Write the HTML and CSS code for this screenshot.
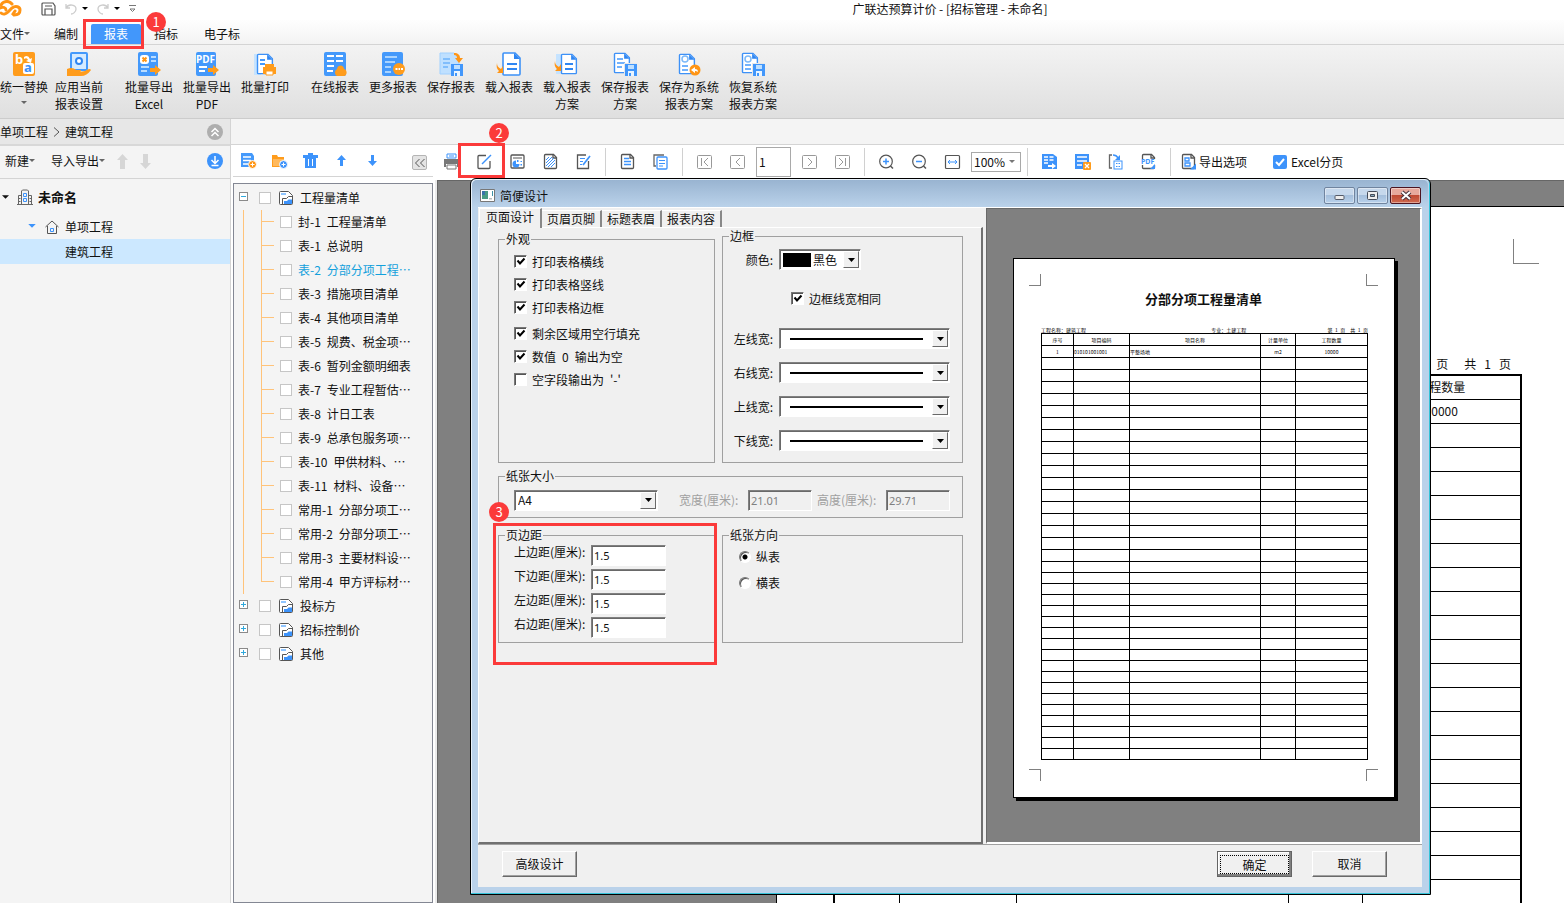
FILE: index.html
```html
<!DOCTYPE html>
<html lang="zh-CN">
<head>
  <meta charset="UTF-8" />
  <meta name="viewport" content="width=device-width, initial-scale=1.0"/>
  <title>广联达预算计价 - [招标管理 - 未命名]</title>
  <link rel="stylesheet" href="styles.css">
</head>
<body>

  <!-- shared icons -->
  <svg class="sprite" aria-hidden="true">
    <symbol id="i-page" viewBox="0 0 24 24">
      <path d="M5 1h11l5 5v16a1 1 0 0 1-1 1H5a1 1 0 0 1-1-1V2a1 1 0 0 1 1-1z" fill="#fff" stroke="#3d91f7" stroke-width="1.6"/>
      <path d="M15 1l6 6h-6z" fill="#2f86f2"/>
    </symbol>
    <symbol id="i-floppy" viewBox="0 0 12 12">
      <path d="M0 0h12v12H0z" fill="#4297fb"/>
      <path d="M3 1h6v4H3z" fill="#bfe0ff"/>
      <path d="M3 7h6v5H3z" fill="#eaf5ff"/>
      <path d="M4 9h2v3H4z" fill="#4297fb"/>
    </symbol>
    <symbol id="i-caret" viewBox="0 0 6 4"><path d="M0 0h6L3 3z" fill="currentColor"/></symbol>
    <symbol id="i-report" viewBox="0 0 16 16">
      <path d="M1.500 2.500a1 1 0 0 1 1-1h8l4 4v8a1 1 0 0 1-1 1h-11a1 1 0 0 1-1-1z" fill="#fff" stroke="#555"/>
      <path d="M3 3h5v2H3z" fill="#8fc5ff"/>
      <path d="M4.500 14V8.500h4l2-2h4" fill="none" stroke="#555"/>
      <path d="M6 11h3l1.500-1.500H14V14H6z" fill="#3d93fb"/>
    </symbol>
    <symbol id="i-sheet" viewBox="0 0 17 17">
      <path d="M3.500 1.500h8l3 3v10a1 1 0 0 1-1 1h-10a1 1 0 0 1-1-1v-12a1 1 0 0 1 1-1z" fill="#fff" stroke="#555" stroke-width="1.300"/>
      <path d="M11 1.500v3.500h3.500" fill="none" stroke="#555" stroke-width="1.300"/>
    </symbol>
  </svg>

  <header class="titlebar">
    <div class="quick">
      <svg class="logo" width="22" height="17" viewBox="0 0 22 17" fill="none" stroke="#ff9515" stroke-width="3" stroke-linecap="round"><path d="M1 5C3 1 9 0 12 4"/><path d="M0 8c3-2 6 0 6 2"/><path d="M1 13c2 2 5 1 7-1l4-4c4-3 8-1 8 2 0 4-3 5-6 5l-1-1 2-3"/></svg>
      <button class="q-save" aria-label="保存"><svg width="15" height="14" viewBox="0 0 15 14" fill="none" stroke="#555" stroke-width="1.2"><path d="M2 1h10l2 3v8a1 1 0 0 1-1 1H2a1 1 0 0 1-1-1V2a1 1 0 0 1 1-1zM4 4h7M4 13V7h7v6"/></svg></button>
      <button aria-label="撤销"><svg width="12" height="13" viewBox="0 0 12 13" fill="none" stroke="#ccc" stroke-width="1.300"><path d="M1 2v4h4M1 6c3-5 10-3 10 1 0 3-3 5-5 5"/></svg></button>
      <button class="dark" aria-label="撤销列表"><svg width="6" height="4"><use href="#i-caret"/></svg></button>
      <button aria-label="恢复"><svg width="12" height="13" viewBox="0 0 12 13" fill="none" stroke="#ccc" stroke-width="1.300"><path d="M11 2v4H7M11 6C8 1 1 3 1 7c0 3 3 5 5 5"/></svg></button>
      <button class="dark" aria-label="恢复列表"><svg width="6" height="4"><use href="#i-caret"/></svg></button>
      <button aria-label="自定义"><svg width="7" height="8" viewBox="0 0 7 8" fill="none" stroke="#777"><path d="M0 .5h7M1 4h5L3.500 6.500z"/></svg></button>
    </div>
    <h1>广联达预算计价 - [招标管理 - 未命名]</h1>
  </header>

  <nav class="menu">
    <button class="file">文件<svg width="6" height="4"><use href="#i-caret"/></svg></button>
    <button>编制</button>
    <button class="active">报表<span class="mark mark-tab"></span></button>
    <button>指标<span class="badge badge-tab">1</span></button>
    <button>电子标</button>
  </nav>

  <section class="ribbon">
    <button class="first">
      <svg viewBox="0 0 24 24"><rect x="1" width="22" height="24" rx="2" fill="#ff9c1c"/><text x="3" y="12" class="ic-b" fill="#fff">b</text><path d="M12 5q4-3 6 2l2-1-1 5-5-2 2-1q-1-3-4-1z" fill="#fff"/><rect x="11" y="11" width="11" height="11" rx="2" fill="#fff"/><text x="12" y="20" class="ic-b" fill="#3d91f7">a</text></svg>
      <span>统一替换</span>
      <svg class="drop"><use href="#i-caret"/></svg>
    </button>
    <button>
      <svg viewBox="0 0 24 24"><rect x="4" y="1" width="16" height="17" rx="1" fill="#d4eaff" stroke="#4499fb" stroke-width="2"/><circle cx="12" cy="9" r="3" fill="#fff" stroke="#2f86f2" stroke-width="2"/><path d="M0 17c4-2 7-1 9 1h4c2 0 1 2-1 2l6-1c3-2 5-3 6-1-3 4-6 6-10 6H0z" fill="#ff9c1c"/></svg>
      <span>应用当前<br>报表设置</span>
    </button>
    <button class="gap">
      <svg viewBox="0 0 24 24"><rect x="1" width="20" height="24" rx="2" fill="#4499fb"/><rect x="3" y="3" width="9" height="9" rx="3" fill="#fff"/><path d="M5.500 5.500l4 4m0-4l-4 4" stroke="#ff9515" stroke-width="2"/><path d="M14 5h5M14 9h5M4 15h8M4 19h6" stroke="#b9dcff" stroke-width="2"/><path d="M13 16h5v-3l6 5-6 5v-3h-5z" fill="#ff9c1c"/></svg>
      <span>批量导出<br>Excel</span>
    </button>
    <button>
      <svg viewBox="0 0 24 24"><rect x="1" width="20" height="24" rx="2" fill="#4499fb"/><text x="1" y="11" class="ic-pdf" fill="#fff">PDF</text><path d="M4 15h8M4 19h6" stroke="#fff" stroke-width="2"/><path d="M13 16h5v-3l6 5-6 5v-3h-5z" fill="#ff9c1c"/></svg>
      <span>批量导出<br>PDF</span>
    </button>
    <button>
      <svg viewBox="0 0 24 24"><rect x="1" y="2" width="7" height="21" fill="#c5e3ff"/><use href="#i-page" width="21" height="24" x="1"/><path d="M7 8h5M7 12h5" stroke="#4499fb" stroke-width="2"/><path d="M12 12h9v3h2v7H10v-7h2z" fill="#ff9c1c"/><path d="M13 19h7v4h-7z" fill="#fff" stroke="#ff9c1c"/></svg>
      <span>批量打印</span>
    </button>
    <button class="gap">
      <svg viewBox="0 0 24 24"><rect x="1" width="22" height="24" rx="2" fill="#4499fb"/><path d="M4 4h7M13 4h7M4 9h7M13 9h7M4 14h7M4 19h6" stroke="#fff" stroke-width="2"/><path d="M14 24a4 4 0 0 1 0-7c1-5 7-4 7 0 4 1 3 7 0 7z" fill="#ff9c1c"/></svg>
      <span>在线报表</span>
    </button>
    <button>
      <svg viewBox="0 0 24 24"><rect x="1" width="21" height="24" rx="2" fill="#4499fb"/><path d="M4 5h12M4 10h10M4 15h6M4 20h6" stroke="#a8d3ff" stroke-width="2"/><circle cx="18" cy="17" r="6" fill="#ff9c1c"/><path d="M14.500 17h2m1 0h1.500m1 0h2" stroke="#fff" stroke-width="2"/></svg>
      <span>更多报表</span>
    </button>
    <button>
      <svg viewBox="0 0 24 24"><path d="M1 1h14l5 5v16H1z" fill="#bfe0ff" stroke="#a0d0ff"/><path d="M4 7h7M4 11h7M4 15h5" stroke="#6db2fb" stroke-width="1.500"/><path d="M15 1c4 0 6 2 6 5h3l-4 5-4-5h2c0-2-1-3-3-3z" fill="#ff9515"/><use href="#i-floppy" x="12" y="12" width="12" height="12"/></svg>
      <span>保存报表</span>
    </button>
    <button>
      <svg viewBox="0 0 24 24"><use href="#i-page" x="2" width="24" height="24"/><path d="M10 12h10M10 17h10" stroke="#2f86f2" stroke-width="2"/><path d="M0 11c0 3 1 4 4 6l2-3v7H0l2-2c-2-2-3-4-2-8z" fill="#ff9515"/></svg>
      <span>载入报表</span>
    </button>
    <button>
      <svg viewBox="0 0 24 24"><path d="M1 2h7v20H1z" fill="#c5e3ff"/><use href="#i-page" x="3" width="21" height="24"/><path d="M10 12h8M10 17h8" stroke="#2f86f2" stroke-width="2"/><path d="M0 9c0 3 1 4 4 6l2-3v7H0l2-2c-2-2-3-4-2-8z" fill="#ff9515"/></svg>
      <span>载入报表<br>方案</span>
    </button>
    <button>
      <svg viewBox="0 0 24 24"><use href="#i-page" x="-2" width="21" height="22"/><path d="M4 7h6M4 11h8M4 15h5" stroke="#4499fb" stroke-width="1.500"/><path d="M11 11h13v13H11z" fill="#e8e8e8"/><use href="#i-floppy" x="12" y="12" width="12" height="12"/></svg>
      <span>保存报表<br>方案</span>
    </button>
    <button class="wide">
      <svg viewBox="0 0 24 24"><use href="#i-page" x="-1" width="21" height="24"/><circle cx="8" cy="7" r="3" fill="none" stroke="#7db9f8" stroke-width="1.500"/><path d="M5 14h6M5 18h6" stroke="#4499fb" stroke-width="1.500"/><circle cx="18" cy="18" r="5.500" fill="#ff9515"/><path d="M14 18l4-3v2c2 0 3 1 3 3-1-1-2-1-3-1v2z" fill="#fff"/></svg>
      <span>保存为系统<br>报表方案</span>
    </button>
    <button>
      <svg viewBox="0 0 24 24"><use href="#i-page" x="-2" width="21" height="22"/><circle cx="7" cy="7" r="3" fill="none" stroke="#7db9f8" stroke-width="1.500"/><path d="M4 13h6M4 17h6" stroke="#4499fb" stroke-width="1.500"/><path d="M11 11h13v13H11z" fill="#e8e8e8"/><use href="#i-floppy" x="12" y="12" width="12" height="12"/></svg>
      <span>恢复系统<br>报表方案</span>
    </button>
  </section>

  <main>
    <aside class="projects">
      <div class="crumbs">
        <span>单项工程</span>
        <svg width="7" height="10" viewBox="0 0 7 10" fill="none" stroke="#555"><path d="M1 .5L6 5 1 9.500"/></svg>
        <span>建筑工程</span>
        <button class="push" aria-label="折叠"><svg width="16" height="16" viewBox="0 0 16 16"><circle cx="8" cy="8" r="8" fill="#aeaeae"/><path d="M4.500 8L8 4.500 11.500 8M4.500 12L8 8.500l3.500 3.500" fill="none" stroke="#fff" stroke-width="1.500"/></svg></button>
      </div>
      <div class="project-tools">
        <button>新建<svg width="6" height="4"><use href="#i-caret"/></svg></button>
        <button>导入导出<svg width="6" height="4"><use href="#i-caret"/></svg></button>
        <button aria-label="上移"><svg width="11" height="15" viewBox="0 0 11 15"><path d="M5.500 0L11 6H8v9H3V6H0z" fill="#d6d6d6"/></svg></button>
        <button aria-label="下移"><svg width="11" height="15" viewBox="0 0 11 15"><path d="M5.500 15L0 9h3V0h5v9h3z" fill="#d6d6d6"/></svg></button>
        <button class="push" aria-label="下载"><svg width="16" height="16" viewBox="0 0 16 16"><circle cx="8" cy="8" r="8" fill="#3d93fb"/><path d="M8 3v7M4.500 7L8 10.500 11.500 7M4.500 12.500h7" fill="none" stroke="#fff" stroke-width="1.500"/></svg></button>
      </div>
      <ul class="project-tree">
        <li class="root"><svg width="7" height="5"><use href="#i-caret"/></svg>
          <svg width="16" height="16" viewBox="0 0 16 16" fill="none" stroke="#666"><path d="M0 15.500h16M4.500 15V2l1-1h5l1 1v13M1.500 15V6.500h3M11.500 6.500h3V15M1.500 9.500h2M1.500 12.500h2M12.500 9.500h2M12.500 12.500h2"/><path d="M6.500 4.500h3v3h-3zM6.500 9.500h3v3h-3z" stroke="#3d93fb"/></svg>
          未命名</li>
        <li class="node"><svg class="blue" width="8" height="5"><use href="#i-caret"/></svg>
          <svg width="14" height="14" viewBox="0 0 14 14" fill="none" stroke="#555"><path d="M.5 7L7 1l6.500 6M2.500 6v7.500h9V6"/><path d="M5.500 8.500h3v3h-3z" stroke="#3d93fb"/></svg>
          单项工程</li>
        <li class="leaf">建筑工程</li>
      </ul>
    </aside>

    <div class="work">
      <div class="strip"></div>
      <div class="columns">

        <section class="reports">
          <div class="report-tools">
            <button aria-label="新建报表"><svg width="17" height="16" viewBox="0 0 17 16"><path d="M1 0h11l2 3v11H1z" fill="#4499fb"/><path d="M3 4h8M3 7.500h8M3 11h5" stroke="#fff" stroke-width="1.300"/><circle cx="12.500" cy="11.500" r="4" fill="#ff9515" stroke="#fff"/><path d="M10.500 11.500h4m-2-2v4" stroke="#fff"/></svg></button>
            <button aria-label="新建文件夹"><svg width="17" height="16" viewBox="0 0 17 16"><path d="M1 2h5l1 2h6v10H1z" fill="#ff9c1c"/><path d="M2 6h11v7H2z" fill="#ffb95c"/><circle cx="12.500" cy="11.500" r="4" fill="#3d93fb" stroke="#fff"/><path d="M10.500 11.500h4m-2-2v4" stroke="#fff"/></svg></button>
            <button aria-label="删除"><svg width="15" height="16" viewBox="0 0 15 16"><path d="M5 0h5v2h5v3h-2v10H2V5H0V2h5z" fill="#3d93fb"/><path d="M5.500 6v7M9.500 6v7" stroke="#fff"/></svg></button>
            <button aria-label="上移"><svg width="9" height="11" viewBox="0 0 9 11"><path d="M4.500 0L9 5H6v6H3V5H0z" fill="#3d93fb"/></svg></button>
            <button aria-label="下移"><svg width="9" height="11" viewBox="0 0 9 11"><path d="M4.500 11L0 6h3V0h3v6h3z" fill="#3d93fb"/></svg></button>
            <button class="fold" aria-label="收起"><svg width="10" height="8" viewBox="0 0 10 8" fill="none" stroke="#555"><path d="M4.500 0L.5 4l4 4M9.500 0l-4 4 4 4"/></svg></button>
          </div>
          <ul class="report-tree" id="reportTree"></ul>
        </section>

        <section class="viewer">
          <div class="view-tools">
            <button aria-label="打印"><svg viewBox="0 0 17 17"><path d="M4 1h9v4H4z" fill="#fff" stroke="#3d93fb"/><path d="M6 3h5" stroke="#3d93fb"/><path d="M1 6h15v8h-2v-3H3v3H1z" fill="#777"/><path d="M4 12h9v4H4z" fill="#fff" stroke="#777"/></svg></button>
            <button aria-label="简便设计"><svg viewBox="0 0 17 17" fill="none"><path d="M10 2.500H3a1 1 0 0 0-1 1v11a1 1 0 0 0 1 1h10a1 1 0 0 0 1-1V8" stroke="#555" stroke-width="1.300"/><path d="M6 11l9-9" stroke="#3d93fb" stroke-width="1.500"/></svg><span class="mark mark-tool"></span><span class="badge badge-tool">2</span></button>
            <button aria-label="高级设计"><svg viewBox="0 0 17 17"><rect x="2" y="2" width="13" height="13" rx="1" fill="#fff" stroke="#555" stroke-width="1.300"/><path d="M4 5h9" stroke="#555"/><path d="M7 7.500v3.500h3.500A3.500 3.500 0 1 1 7 7.500z" fill="#3d93fb"/><path d="M8 7h1.500v2H8zM11.500 8H13v1h-1.500zM11.500 11H13v1.500h-1.500z" fill="#3d93fb"/></svg></button>
            <button aria-label="背景"><svg viewBox="0 0 17 17"><use href="#i-sheet"/><path d="M4 7l3-3M4 10l6-6M4 13l8-8M6 14l7-7M9 14l4-4" stroke="#3d93fb"/></svg></button>
            <button aria-label="编辑"><svg viewBox="0 0 17 17" fill="none"><path d="M11 2H2.500v13.500h11V8" stroke="#555" stroke-width="1.300"/><path d="M5 5.500h5M5 8.500h3M5 11.500h2" stroke="#3d93fb"/><path d="M8 12l7-9" stroke="#3d93fb" stroke-width="1.700"/></svg></button>
            <i class="sep"></i>
            <button aria-label="单页"><svg viewBox="0 0 17 17"><use href="#i-sheet"/><path d="M5 5.500h5M5 8.500h7M5 11.500h7" stroke="#3d93fb" stroke-width="1.300"/></svg></button>
            <button aria-label="多页"><svg viewBox="0 0 17 17"><path d="M12 2H2v11h2" fill="none" stroke="#666" stroke-width="1.300"/><rect x="5" y="4" width="10" height="12" rx="1" fill="#fff" stroke="#3d93fb" stroke-width="1.300"/><path d="M7 7.500h6M7 10.500h6M7 13h4" stroke="#3d93fb"/></svg></button>
            <i class="sep"></i>
            <button aria-label="首页"><svg viewBox="0 0 17 17" fill="none" stroke="#999"><rect x="1.500" y="2.500" width="14" height="13" rx="1"/><path d="M5.500 5v8M12 5L8 9l4 4"/></svg></button>
            <button aria-label="上一页"><svg viewBox="0 0 17 17" fill="none" stroke="#999"><rect x="1.500" y="2.500" width="14" height="13" rx="1"/><path d="M11 5L7 9l4 4"/></svg></button>
            <input type="text" class="page-no" value="1" aria-label="页码">
            <button aria-label="下一页"><svg viewBox="0 0 17 17" fill="none" stroke="#999"><rect x="1.500" y="2.500" width="14" height="13" rx="1"/><path d="M7 5l4 4-4 4"/></svg></button>
            <button aria-label="末页"><svg viewBox="0 0 17 17" fill="none" stroke="#999"><rect x="1.500" y="2.500" width="14" height="13" rx="1"/><path d="M5 5l4 4-4 4M11.500 5v8"/></svg></button>
            <i class="sep"></i>
            <button aria-label="放大"><svg viewBox="0 0 17 17" fill="none"><circle cx="8" cy="8.500" r="6.300" stroke="#555" stroke-width="1.200"/><path d="M12.500 13l2.500 2.500" stroke="#555" stroke-width="1.500"/><path d="M5 8.500h6m-3-3v6" stroke="#3d93fb" stroke-width="1.500"/></svg></button>
            <button aria-label="缩小"><svg viewBox="0 0 17 17" fill="none"><circle cx="8" cy="8.500" r="6.300" stroke="#555" stroke-width="1.200"/><path d="M12.500 13l2.500 2.500" stroke="#555" stroke-width="1.500"/><path d="M5 8.500h6" stroke="#3d93fb" stroke-width="1.500"/></svg></button>
            <button aria-label="适合宽度"><svg viewBox="0 0 17 17" fill="none"><rect x="1.500" y="2.500" width="14" height="13" rx="1" stroke="#555" stroke-width="1.200"/><path d="M4 9h9M6 7L4 9l2 2M11 7l2 2-2 2" stroke="#3d93fb"/></svg></button>
            <select class="zoom" aria-label="显示比例"><option>100%</option></select>
            <i class="sep"></i>
            <button aria-label="导出Excel"><svg viewBox="0 0 17 17"><path d="M1 1h11l4 3v12H1z" fill="#3d93fb"/><path d="M3 4h4M8.500 4h4M3 7h4M8.500 7h4M3 10h4" stroke="#fff" stroke-width="1.300"/><path d="M7 12h4v-2l4 3-4 3v-2H7z" fill="#fff"/></svg></button>
            <button aria-label="导出Excel设置"><svg viewBox="0 0 17 17"><path d="M1 1h14v15H1z" fill="#3d93fb"/><path d="M3 4h10M3 8h10M3 12h5" stroke="#fff" stroke-width="1.500"/><rect x="9" y="9" width="8" height="8" rx="1" fill="#ff9c1c"/><path d="M11 11l4 4m0-4l-4 4" stroke="#fff" stroke-width="1.300"/></svg></button>
            <button aria-label="导出到文件"><svg viewBox="0 0 17 17" fill="none"><path d="M5 2H2.500v13H5" stroke="#666" stroke-width="1.300"/><path d="M6 2c3 0 4 1 5 3" stroke="#3d93fb" stroke-width="1.500"/><path d="M13 2v5H8z" fill="#3d93fb"/><rect x="7" y="8" width="8" height="8" fill="#fff" stroke="#3d93fb"/><path d="M9 10.500h1.500m1 0H13M9 13.500h1.500m1 0H13" stroke="#3d93fb"/></svg></button>
            <button aria-label="导出PDF"><svg viewBox="0 0 17 17"><use href="#i-sheet"/><path d="M1 6h15v6H1z" fill="#fff"/><text x="1" y="11" class="ic-small" fill="#3d93fb">PDF</text><path d="M10 16l5-5v5z" fill="#3d93fb"/></svg></button>
            <i class="sep"></i>
            <button class="text-tool"><svg viewBox="0 0 17 17"><use href="#i-sheet"/><path d="M5 5h4v3H5zM5 10h5v3H5z" fill="none" stroke="#3d93fb" stroke-width="1.300"/><path d="M10 16.500l6-6v6z" fill="#3d93fb"/></svg>导出选项</button>
            <label class="excel-page"><input type="checkbox" checked>Excel分页</label>
          </div>

          <div class="canvas">
            <div class="sheet">
              <i class="corner"></i>
              <p class="sheet-pages"><span>第</span><span>1</span><span>页</span><span class="total">共</span><span>1</span><span>页</span></p>
              <table class="sheet-table">
                <colgroup><col class="s1"><col class="s2"><col class="s3"><col class="s4"><col class="s5"></colgroup>
                <tbody id="sheetRows">
                  <tr><td></td><td></td><td></td><td></td><td>工程数量</td></tr>
                  <tr><td></td><td></td><td></td><td></td><td>10000</td></tr>
                </tbody>
              </table>
            </div>
          </div>

          <div class="dialog" role="dialog" aria-labelledby="dlgTitle">
            <div class="dialog-title">
              <svg width="15" height="13" viewBox="0 0 15 13"><path d="M.5.500h14v12H.5z" fill="#fff" stroke="#777"/><path d="M2 2h6v8H2z" fill="#4a9c84"/><path d="M2 2h3v4H2z" fill="#3b73a8"/><path d="M12 2h1v5h-1z" fill="#3d93a8"/><path d="M9 9h3v1.500H9z" fill="#bbb"/></svg>
              <h2 id="dlgTitle">简便设计</h2>
              <button aria-label="最小化"><svg width="11" height="9" viewBox="0 0 11 9"><rect x="1" y="4.500" width="9" height="4" rx="1" fill="#eee" stroke="#555b68"/></svg></button>
              <button aria-label="最大化"><svg width="11" height="9" viewBox="0 0 11 9"><rect x=".5" y=".5" width="10" height="8" rx="1" fill="#eee" stroke="#454b58"/><path d="M3.500 3.500h4v2h-4z" fill="#8ab" stroke="#454b58"/></svg></button>
              <button class="close" aria-label="关闭"><svg width="12" height="9" viewBox="0 0 12 9"><path d="M2 1l8 7M10 1L2 8" stroke="#46333a" stroke-width="4"/><path d="M2 1l8 7M10 1L2 8" stroke="#fff" stroke-width="2"/></svg></button>
            </div>

            <div class="dialog-body">
              <div class="settings">
                <div class="tabs" role="tablist">
                  <button role="tab" class="on">页面设计</button><button role="tab">页眉页脚</button><button role="tab">标题表眉</button><button role="tab">报表内容</button>
                </div>
                <form class="pane">
                  <div class="pair top">
                    <fieldset class="look">
                      <legend>外观</legend>
                      <label class="check"><input type="checkbox" checked>打印表格横线</label>
                      <label class="check"><input type="checkbox" checked>打印表格竖线</label>
                      <label class="check"><input type="checkbox" checked>打印表格边框</label>
                      <label class="check part"><input type="checkbox" checked>剩余区域用空行填充</label>
                      <label class="check"><input type="checkbox" checked>数值&ensp;0&ensp;输出为空</label>
                      <label class="check"><input type="checkbox">空字段输出为&ensp;'-'</label>
                    </fieldset>
                    <fieldset class="frame">
                      <legend>边框</legend>
                      <div class="field"><label for="color">颜色:</label>
                        <div class="combo color"><i class="swatch"></i><select id="color"><option>黑色</option></select><i class="arrow"></i></div></div>
                      <label class="check same"><input type="checkbox" checked>边框线宽相同</label>
                      <div class="field"><label for="lw1">左线宽:</label><div class="combo line"><select id="lw1"></select><i class="arrow"></i></div></div>
                      <div class="field"><label for="lw2">右线宽:</label><div class="combo line"><select id="lw2"></select><i class="arrow"></i></div></div>
                      <div class="field"><label for="lw3">上线宽:</label><div class="combo line"><select id="lw3"></select><i class="arrow"></i></div></div>
                      <div class="field"><label for="lw4">下线宽:</label><div class="combo line"><select id="lw4"></select><i class="arrow"></i></div></div>
                    </fieldset>
                  </div>

                  <fieldset class="paper">
                    <legend>纸张大小</legend>
                    <div class="combo size"><select aria-label="纸张大小"><option>A4</option></select><i class="arrow"></i></div>
                    <label for="pw" class="off">宽度(厘米):</label><input id="pw" class="num" value="21.01" disabled>
                    <label for="ph" class="off">高度(厘米):</label><input id="ph" class="num" value="29.71" disabled>
                  </fieldset>

                  <div class="pair">
                    <fieldset class="margins">
                      <legend>页边距</legend>
                      <label for="mt">上边距(厘米):</label><input id="mt" class="num" value="1.5">
                      <label for="mb">下边距(厘米):</label><input id="mb" class="num" value="1.5">
                      <label for="ml">左边距(厘米):</label><input id="ml" class="num" value="1.5">
                      <label for="mr">右边距(厘米):</label><input id="mr" class="num" value="1.5">
                      <span class="mark mark-margins"></span><span class="badge badge-margins">3</span>
                    </fieldset>
                    <fieldset class="direction">
                      <legend>纸张方向</legend>
                      <label class="check"><input type="radio" name="dir" checked>纵表</label>
                      <label class="check"><input type="radio" name="dir">横表</label>
                    </fieldset>
                  </div>
                </form>
              </div>

              <div class="preview">
                <div class="paper-page">
                  <div class="crops"><i></i><i></i></div>
                  <h3>分部分项工程量清单</h3>
                  <div class="paper-info"><span>工程名称：建筑工程</span><span class="trade">专业：土建工程</span><span>第&ensp;1&ensp;页&emsp;共&ensp;1&ensp;页</span></div>
                  <table class="mini">
                    <colgroup><col class="m1"><col class="m2"><col class="m3"><col class="m4"><col class="m5"></colgroup>
                    <thead><tr><th>序号</th><th>项目编码</th><th>项目名称</th><th>计量单位</th><th>工程数量</th></tr></thead>
                    <tbody id="miniRows"><tr><td>1</td><td class="l">010101001001</td><td class="l">平整场地</td><td>m2</td><td>10000</td></tr></tbody>
                  </table>
                  <div class="crops low"><i></i><i></i></div>
                </div>
              </div>
            </div>

            <div class="dialog-foot">
              <button>高级设计</button>
              <button class="default"><span>确定</span></button>
              <button>取消</button>
            </div>
          </div>
        </section>
      </div>
    </div>
  </main>

  <script src="app.js"></script>
</body>
</html>
```

FILE: styles.css
```css
:root {
  --blue: #3d93fb;
  --line: #d4d4d4;
  --panel: #f4f4f4;
  --face: #f0f0f0;
  --red: #fb3a3a;
}

* {
  box-sizing: border-box;
}

body {
  font-family: "Noto Sans CJK SC", sans-serif;
  font-size: 12px;
  line-height: 14px;
  margin: 0;
  color: #111;
  height: 100vh;
  overflow: hidden;
  display: flex;
  flex-direction: column;
  background: var(--panel);
}

button, input, select {
  font: inherit;
  color: inherit;
  margin: 0;
}

button {
  border: none;
  background: none;
  padding: 0;
  white-space: nowrap;
}

svg {
  display: block;
  flex: none;
  overflow: visible;
}

ul {
  list-style: none;
  margin: 0;
  padding: 0;
}

h1, h2, h3, p {
  margin: 0;
  font-size: 12px;
  font-weight: normal;
}

.sprite {
  position: absolute;
  width: 0;
  height: 0;
}

/* red call-outs */
.mark {
  position: absolute;
  border: 3px solid var(--red);
  pointer-events: none;
  z-index: 5;
}

.badge {
  position: absolute;
  width: 20px;
  height: 20px;
  border-radius: 50%;
  background: var(--red);
  color: #fff;
  font-size: 13px;
  line-height: 20px;
  text-align: center;
  z-index: 6;
}

.mark-tab { inset: -5px -3px -5px -8px; }
.badge-tab { left: 5px; top: -12px; }
.mark-tool { inset: -3px -4px 0 -10px; }
.badge-tool { left: 21px; top: -23px; }
.mark-margins { inset: -19px -3px -23px -6px; }
.badge-margins { left: -10px; top: -40px; }

/* title and menu */
.titlebar {
  display: flex;
  height: 20px;
  flex: none;
  background: #fff;
}

.titlebar h1 {
  flex: 1;
  text-align: center;
  line-height: 18px;
}

.quick {
  flex: 0 0 336px;
  display: flex;
  align-items: center;
  gap: 9px;
  height: 17px;
}

.quick .q-save { margin-left: 10px; }

.quick .dark {
  margin-left: -4px;
  color: #000;
}

.menu {
  display: flex;
  flex: none;
  height: 25px;
  padding-top: 4px;
  background: linear-gradient(#fefefe, #f3f3f3);
  border-bottom: 1px solid var(--line);
}

.menu button {
  padding: 0 13px;
  height: 20px;
  position: relative;
}

.menu .file {
  display: flex;
  align-items: center;
  padding-left: 0;
  padding-right: 11px;
}

.menu .active {
  background: #4297fb;
  color: #fff;
  border-radius: 2px 2px 0 0;
}

.file svg, .project-tools svg {
  color: #666;
}

.ribbon {
  display: flex;
  flex: none;
  height: 74px;
  padding-top: 7px;
  background: linear-gradient(#f3f3f3, #dfdfdf);
  border-bottom: 1px solid #ccc;
}

.ribbon button {
  flex: none;
  width: 58px;
  display: flex;
  flex-direction: column;
  align-items: center;
  justify-content: flex-start;
  height: 62px;
  line-height: 17px;
  text-align: center;
}

.ribbon button.first {
  width: 52px;
  margin-left: -2px;
}

.ribbon button.gap { margin-left: 12px; }
.ribbon button.wide { width: 70px; }

.ribbon svg {
  width: 24px;
  height: 24px;
  margin-bottom: 2px;
}

.ribbon svg.drop {
  width: 6px;
  height: 4px;
  margin-top: 6px;
  color: #666;
}

.ic-b { font: bold 13px "Noto Sans", sans-serif; }
.ic-pdf { font: bold 10px "Noto Sans", sans-serif; }
.ic-small { font: bold 7px "Noto Sans", sans-serif; }

main {
  flex: 1;
  display: flex;
  min-height: 0;
}

/* project column */
.projects {
  flex: 0 0 231px;
  border-right: 1px solid var(--line);
}

.crumbs {
  display: flex;
  align-items: center;
  gap: 5px;
  height: 27px;
  padding: 0 7px 0 0;
  background: #e7e7e7;
  border-bottom: 2px solid #d8d8d8;
}

.push { margin-left: auto; }

.project-tools {
  display: flex;
  align-items: center;
  gap: 12px;
  height: 33px;
  padding: 0 7px 2px 5px;
  border-bottom: 1px solid var(--line);
}

.project-tools button {
  display: flex;
  align-items: center;
}

.project-tools button:first-child { margin-right: 4px; }

.project-tree { padding-top: 4px; }

.project-tree li {
  display: flex;
  align-items: center;
  height: 28px;
}

.project-tree .root {
  gap: 8px;
  padding-left: 2px;
  font-size: 13px;
  font-weight: bold;
}

.project-tree .root svg + svg { margin-right: -3px; }

.project-tree .node {
  gap: 9px;
  padding-left: 28px;
  padding-top: 3px;
}

.project-tree .node svg + svg { margin-right: -3px; }

.project-tree .leaf {
  height: 25px;
  padding-left: 65px;
  background: #cce8ff;
}

.blue { color: var(--blue); }

.work {
  flex: 1;
  display: flex;
  flex-direction: column;
  min-width: 0;
}

.strip {
  height: 26px;
  flex: none;
  border-bottom: 1px solid var(--line);
}

.columns {
  flex: 1;
  display: flex;
  min-height: 0;
}

/* report list */
.reports {
  flex: 0 0 206px;
  display: flex;
  flex-direction: column;
  padding: 0 2px;
  background: #fff;
  border-right: 2px solid #ececec;
}

.report-tools {
  display: flex;
  align-items: center;
  height: 32px;
  flex: none;
  border-bottom: 1px solid var(--line);
  margin-bottom: 6px;
}

.report-tools button {
  flex: 0 0 31px;
  display: flex;
  justify-content: center;
}

.report-tools .fold {
  flex: 0 0 15px;
  height: 15px;
  align-items: center;
  margin: 4px 6px 0 auto;
  border: 1px solid #b5b5b5;
  border-radius: 2px;
  background: #e4e4e4;
}

.report-tree {
  flex: 1;
  padding-top: 2px;
  overflow: hidden;
  border: 1px solid #838793;
  background: var(--panel);
}

.report-tree label {
  display: flex;
  align-items: center;
  gap: 6px;
  height: 24px;
  white-space: nowrap;
}

.report-tree input {
  appearance: none;
  width: 12px;
  height: 12px;
  border: 1px solid #c6c6c6;
  background: #fff;
}

.group-row {
  display: flex;
  align-items: center;
  gap: 11px;
  padding-left: 5px;
}

.group-row label { gap: 7px; }
.group-row label svg { margin-right: -1px; }

.expander {
  width: 9px;
  height: 9px;
  border: 1px solid #8a8a8a;
  margin-bottom: 4px;
  background: linear-gradient(#2fa8dc, #2fa8dc) center / 5px 1px no-repeat #fff;
}

.expander.plus {
  background: linear-gradient(#2fa8dc, #2fa8dc) center / 5px 1px no-repeat, linear-gradient(#2fa8dc, #2fa8dc) center / 1px 5px no-repeat #fff;
}

.children {
  background: linear-gradient(#ffc37a, #ffc37a) 9px 0 / 1px 100% no-repeat;
}

/* connector lines are painted behind each row */
.children li {
  padding-left: 46px;
  background: linear-gradient(#ffc37a, #ffc37a) 27px 0 / 1px 100% no-repeat, linear-gradient(#ffc37a, #ffc37a) 27px 11px / 13px 1px no-repeat;
}

.children li:last-child {
  background: linear-gradient(#ffc37a, #ffc37a) 27px 0 / 1px 11px no-repeat, linear-gradient(#ffc37a, #ffc37a) 27px 11px / 13px 1px no-repeat;
}

.children .current { color: #12a0dc; }

/* viewer */
.viewer {
  flex: 1;
  min-width: 0;
  display: flex;
  flex-direction: column;
  position: relative;
}

.view-tools {
  display: flex;
  align-items: center;
  height: 35px;
  flex: none;
  margin-left: -2px;
  padding-bottom: 2px;
  background: #fff;
}

.view-tools button {
  flex: none;
  width: 33px;
  height: 32px;
  display: flex;
  align-items: center;
  justify-content: center;
  position: relative;
}

.view-tools svg {
  width: 17px;
  height: 17px;
}

.sep {
  flex: none;
  width: 11px;
  align-self: stretch;
  background: linear-gradient(#d0d0d0, #d0d0d0) center 3px / 1px 28px no-repeat;
}

.view-tools .page-no {
  width: 35px;
  height: 30px;
  margin: 0 2px;
  padding: 0 2px;
  border: 1px solid #a9a9a9;
  flex: none;
}

.zoom {
  appearance: none;
  flex: none;
  width: 50px;
  height: 20px;
  margin: 0 1px 0 2px;
  padding: 0 2px;
  border: 1px solid #a9a9a9;
  border-radius: 0;
  background: url("data:image/svg+xml,%3Csvg xmlns='http://www.w3.org/2000/svg' width='6' height='3'%3E%3Cpath d='M0 0h6L3 3z' fill='%23777'/%3E%3C/svg%3E") right 5px center no-repeat #fff;
}

.view-tools .text-tool {
  width: auto;
  gap: 2px;
  padding: 0 6px 0 4px;
}

.excel-page {
  display: flex;
  align-items: center;
  gap: 4px;
  margin-left: 20px;
  white-space: nowrap;
}

.excel-page input {
  appearance: none;
  width: 14px;
  height: 14px;
  border-radius: 2px;
  background: url("data:image/svg+xml,%3Csvg xmlns='http://www.w3.org/2000/svg' width='14' height='14'%3E%3Cpath d='M3 7l3 3 5-6' fill='none' stroke='%23fff' stroke-width='2'/%3E%3C/svg%3E") var(--blue);
}

.canvas {
  flex: 1;
  min-height: 0;
  overflow: hidden;
  padding: 25px 0 0 338px;
  background: #808080;
  border-top: 1px solid #666;
  border-left: 1px solid #666;
}

.sheet {
  width: 804px;
  padding: 32px 58px 0 56px;
  background: #fff;
  border-top: 1px solid #000;
  border-left: 1px solid #000;
}

.corner {
  display: block;
  width: 26px;
  height: 25px;
  margin: 0 -17px 93px auto;
  border-left: 1px solid #808080;
  border-bottom: 1px solid #808080;
}

.sheet-pages {
  display: flex;
  justify-content: flex-end;
  gap: 8px;
  padding-right: 11px;
  margin-bottom: 3px;
}

.sheet-pages .total { margin-left: 8px; }

.sheet-table {
  width: 100%;
  table-layout: fixed;
  border-collapse: collapse;
  border: 2px solid #000;
  text-align: center;
}

.sheet-table td {
  height: 24px;
  padding: 0;
  border: 1px solid #000;
}

.s1 { width: 65px; }
.s2 { width: 117px; }
.s4 { width: 74px; }
.s5 { width: 159px; }

/* dialog window */
.dialog {
  position: absolute;
  left: 33px;
  right: 133px;
  top: 33px;
  bottom: 8px;
  display: flex;
  flex-direction: column;
  padding: 0 8px 7px 7px;
  border: 1px solid #000;
  border-radius: 6px 6px 0 0;
  background: #bad2ea;
  box-shadow: inset -1px -1px #35c3d8, inset 1px 1px #e8f2fb;
}

.dialog-title {
  display: flex;
  align-items: center;
  gap: 2px;
  flex: none;
  height: 27px;
  margin: 1px -6px 0;
  padding: 4px 7px 0 8px;
  border-radius: 5px 5px 0 0;
  background: linear-gradient(#99b4d1, #bad2ea);
}

.dialog-title h2 {
  flex: 1;
  padding-left: 3px;
}

.dialog-title button {
  width: 31px;
  height: 17px;
  display: flex;
  align-items: center;
  justify-content: center;
  border: 1px solid #70849f;
  border-radius: 2px;
  background: linear-gradient(#c6d8ec 48%, #a5bfdc 50%, #b9d2ec);
  box-shadow: inset 0 0 0 1px rgba(255,255,255,0.4);
}

.dialog-title .close {
  border-color: #4c1420;
  background: linear-gradient(#e7a99d 45%, #c04a34 50%, #cf6a50);
}

.dialog-body {
  flex: 1;
  display: flex;
  min-height: 0;
  background: var(--face);
  border-top: 1px solid #fff;
  border-bottom: 1px solid #a0a0a0;
}

.settings {
  flex: 0 0 506px;
  display: flex;
  flex-direction: column;
  padding-right: 1px;
}

.tabs {
  display: flex;
  align-items: flex-end;
  height: 19px;
  padding-left: 1px;
  flex: none;
}

.tabs button {
  width: 60px;
  height: 17px;
  border-top: 1px solid #fff;
  border-right: 2px solid #888;
}

.tabs .on {
  width: 63px;
  height: 20px;
  padding-bottom: 3px;
  border-left: 1px solid #fff;
  background: var(--face);
  align-self: flex-start;
  z-index: 1;
}

.pane {
  flex: 1;
  padding: 1px 18px 0 19px;
  border: 1px solid #fff;
  border-right: 2px solid #707070;
  border-bottom: 2px solid #707070;
}

.pair {
  display: flex;
  gap: 7px;
}

.pair.top {
  height: 234px;
  align-items: stretch;
  margin-bottom: 6px;
}

fieldset {
  margin: 0;
  padding: 0 15px;
  min-width: 0;
  border: 1px solid #a0a0a0;
  position: relative;
}

legend {
  padding: 0 1px;
  margin-left: -9px;
}

.look, .margins {
  flex: 0 0 217px;
}

.frame, .direction {
  flex: 1;
}

.look {
  margin-top: 3px;
  padding-top: 4px;
}

.check {
  display: flex;
  align-items: center;
  gap: 5px;
  height: 23px;
}

.check.part { margin-top: 3px; }

.check input {
  appearance: none;
  width: 13px;
  height: 13px;
  border: 1px solid;
  border-color: #777 #fff #fff #777;
  background-color: #fff;
  box-shadow: inset 1px 1px #555;
}

.check input[type="checkbox"]:checked {
  background-image: url("data:image/svg+xml,%3Csvg xmlns='http://www.w3.org/2000/svg' width='11' height='11'%3E%3Cpath d='M2.500 4.500l2.500 3 4.500-5' fill='none' stroke='%23000' stroke-width='2'/%3E%3C/svg%3E");
}

.check input[type="radio"] {
  width: 12px;
  height: 12px;
  border-radius: 50%;
}

.check input[type="radio"]:checked {
  background-image: radial-gradient(circle at center, #000 2px, transparent 3px);
}

.frame {
  padding: 6px 12px 0 9px;
}

.frame legend, .direction legend { margin-left: -3px; }

.field {
  display: flex;
  align-items: center;
  height: 21px;
  margin-bottom: 13px;
}

.field label {
  flex: 0 0 41px;
  margin-right: 6px;
  text-align: right;
}

.frame .same {
  margin: 17px 0 18px 59px;
}

.combo {
  display: flex;
  align-items: center;
  height: 21px;
  padding: 1px;
  border: 1px solid;
  border-color: #808080 #fff #fff #808080;
  background: #fff;
  box-shadow: inset 1px 1px #696969;
}

.combo select {
  appearance: none;
  flex: 1;
  min-width: 0;
  height: 17px;
  padding: 0 2px;
  border: none;
  background: none;
}

.arrow {
  flex: none;
  width: 16px;
  height: 17px;
  border: 1px solid;
  border-color: #fff #696969 #696969 #fff;
  background: url("data:image/svg+xml,%3Csvg xmlns='http://www.w3.org/2000/svg' width='7' height='4'%3E%3Cpath d='M0 0h7L3.500 4z'/%3E%3C/svg%3E") center no-repeat var(--face);
  pointer-events: none;
}

.combo.color { width: 82px; }

.swatch {
  width: 28px;
  height: 14px;
  margin-left: 2px;
  background: #000;
}

.combo.line { flex: 1; }

.combo.line select {
  background: linear-gradient(#000, #000) center / calc(100% - 18px) 2px no-repeat;
}

.paper {
  display: flex;
  align-items: center;
  height: 49px;
  margin-bottom: 10px;
  padding: 0 12px 0 15px;
}

.paper .combo {
  width: 144px;
  margin-right: auto;
}

.off {
  width: 66px;
  color: #a0a0a0;
  margin-right: 3px;
}

.num {
  font-family: "Noto Sans", sans-serif;
  font-size: 11px;
  height: 21px;
  padding: 0 2px;
  border: 1px solid;
  border-color: #808080 #fff #fff #808080;
  background: #fff;
  box-shadow: inset 1px 1px #696969;
}

.num:disabled {
  background: var(--face);
  color: #808080;
}

.paper .num { width: 64px; }
.paper .num + label { margin-left: 5px; }

.margins {
  display: grid;
  grid-template-columns: 77px 75px;
  row-gap: 3px;
  height: 115px;
  align-content: start;
  padding-top: 3px;
}

.direction {
  padding: 2px 16px;
}

.direction legend { margin-left: -10px; }

.direction .check {
  height: 26px;
  gap: 5px;
}

/* print preview */
.preview {
  flex: 1;
  min-width: 0;
  padding: 49px 25px 0 26px;
  background: #808080;
  border: 1px solid #696969;
  border-right: 2px solid #fff;
  border-bottom: 2px solid #fff;
  margin-left: 2px;
}

.paper-page {
  height: 540px;
  padding: 15px 16px 0 15px;
  background: #fff;
  border: 1px solid #000;
  box-shadow: 3px 3px #000;
}

.crops {
  display: flex;
  justify-content: space-between;
}

.crops i {
  width: 12px;
  height: 12px;
  border: solid #808080;
  border-width: 0 1px 1px 0;
}

.crops i + i { border-width: 0 0 1px 1px; }
.crops.low { margin-top: 9px; }
.crops.low i { border-width: 1px 1px 0 0; }
.crops.low i + i { border-width: 1px 0 0 1px; }

.paper-page h3 {
  margin: 5px 0 20px;
  font-size: 13px;
  font-weight: bold;
  line-height: 16px;
  text-align: center;
}

.paper-info {
  display: flex;
  justify-content: space-between;
  margin: 0 10px 0 12px;
  font-size: 5px;
  line-height: 6px;
  color: #000;
}

.trade { margin-left: 44px; }

.mini {
  width: calc(100% - 22px);
  margin-left: 12px;
  table-layout: fixed;
  border-collapse: collapse;
  font-size: 5px;
  line-height: 6px;
  text-align: center;
  color: #000;
}

.mini th, .mini td {
  height: 12px;
  padding: 0;
  font-weight: normal;
  border: 1px solid #000;
}

.mini .short td { height: 11px; }
.mini .l { text-align: left; }

.m1 { width: 32px; }
.m2 { width: 56px; }
.m4 { width: 35px; }
.m5 { width: 72px; }

.dialog-foot {
  display: flex;
  gap: 20px;
  flex: none;
  height: 42px;
  padding: 6px 35px 0 24px;
  background: var(--face);
}

.dialog-foot button {
  width: 75px;
  height: 26px;
  border: 1px solid;
  border-color: #fff #696969 #696969 #fff;
  box-shadow: inset -1px -1px #a0a0a0;
}

.dialog-foot .default {
  margin-left: auto;
  padding: 2px;
  border: 1px solid #646464;
  box-shadow: inset -2px -2px #808080, inset 1px 1px #fff;
}

.default span {
  display: block;
  height: 19px;
  line-height: 17px;
  border: 1px dotted #000;
}
```

FILE: app.js
```js
const groups = [
  { name: '工程量清单', items: [
    ['封-1', '工程量清单'],
    ['表-1', '总说明'],
    ['表-2', '分部分项工程…', true],
    ['表-3', '措施项目清单'],
    ['表-4', '其他项目清单'],
    ['表-5', '规费、税金项…'],
    ['表-6', '暂列金额明细表'],
    ['表-7', '专业工程暂估…'],
    ['表-8', '计日工表'],
    ['表-9', '总承包服务项…'],
    ['表-10', '甲供材料、…'],
    ['表-11', '材料、设备…'],
    ['常用-1', '分部分项工…'],
    ['常用-2', '分部分项工…'],
    ['常用-3', '主要材料设…'],
    ['常用-4', '甲方评标材…']
  ] },
  { name: '投标方' },
  { name: '招标控制价' },
  { name: '其他' }
];

document.getElementById('reportTree').innerHTML = groups.map(g => `
  <li>
    <div class="group-row">
      <i class="expander ${g.items ? '' : 'plus'}"></i>
      <label><input type="checkbox"><svg width="16" height="16"><use href="#i-report"/></svg>${g.name}</label>
    </div>
    ${g.items ? `<ul class="children">${g.items.map(([code, name, current]) => `
      <li class="${current ? 'current' : ''}"><label><input type="checkbox"><span>${code}</span><span>${name}</span></label></li>`).join('')}</ul>` : ''}
  </li>
`).join('');

// empty rows fill the rest of the page
function addRows(id, count, cls) {
  const row = `<tr class="${cls}"><td></td><td></td><td></td><td></td><td></td></tr>`;
  document.getElementById(id).insertAdjacentHTML('beforeend', row.repeat(count));
}

addRows('sheetRows', 22, '');
addRows('miniRows', 17, '');
addRows('miniRows', 18, 'short');
```
